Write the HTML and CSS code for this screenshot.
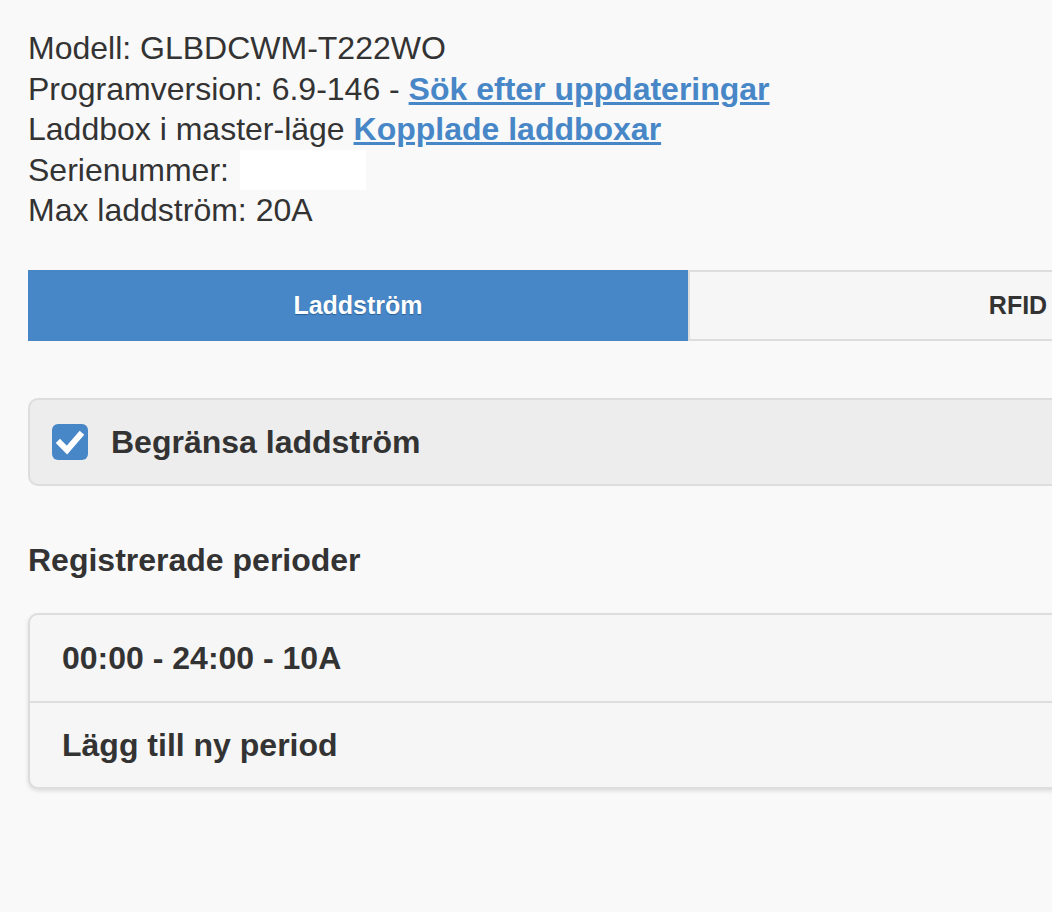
FILE: index.html
```html
<!DOCTYPE html>
<html lang="sv">
<head>
<meta charset="utf-8">
<title>Laddbox</title>
<link rel="stylesheet" href="styles.css">
</head>
<body>
<div class="page">
  <div class="info">
    <div>Modell: GLBDCWM-T222WO</div>
    <div>Programversion: 6.9-146 - <a href="#" class="link">Sök efter uppdateringar</a></div>
    <div>Laddbox i master-läge <a href="#" class="link">Kopplade laddboxar</a></div>
    <div>Serienummer: <span class="masked"></span></div>
    <div>Max laddström: 20A</div>
  </div>

  <div class="navbar">
    <a href="#" class="tab tab-active">Laddström</a>
    <a href="#" class="tab">RFID</a>
  </div>

  <label class="check-panel">
    <span class="checkbox">
      <svg viewBox="0 0 36 36" width="36" height="36"><rect x="0" y="0" width="36" height="36" rx="6" fill="#4887c7"/><path d="M8 19 L15 26 L28 11" fill="none" stroke="#fff" stroke-width="6" stroke-linecap="square" stroke-linejoin="miter"/></svg>
    </span>
    <span class="check-label">Begränsa laddström</span>
  </label>

  <h3 class="heading">Registrerade perioder</h3>

  <ul class="listview">
    <li class="item">00:00 - 24:00 - 10A</li>
    <li class="item">Lägg till ny period</li>
  </ul>
</div>
</body>
</html>
```

FILE: styles.css
```css
html, body {
  margin: 0;
  padding: 0;
  background: #f9f9f9;
  overflow: hidden;
}
body {
  font-family: "Liberation Sans", Arial, Helvetica, sans-serif;
  color: #333;
  font-size: 32px;
  line-height: 40.56px;
}
.page {
  width: 1320px;
  padding: 28px 28px 28px 28px;
}
.info {
  margin-bottom: 39px;
}
.link {
  color: #4887c7;
  font-weight: bold;
  text-decoration: underline;
}
.masked {
  display: inline-block;
  width: 126px;
  height: 40px;
  background: #fff;
  vertical-align: top;
  margin-left: 2px;
}
.navbar {
  display: flex;
  height: 71px;
}
.tab {
  flex: 1;
  display: flex;
  align-items: center;
  justify-content: center;
  font-size: 25px;
  font-weight: bold;
  text-decoration: none;
  color: #333;
  background: #f6f6f6;
  border: 2px solid #dddddd;
  text-shadow: 0 1px 0 #f3f3f3;
}
.tab-active {
  background: #4887c7;
  border-color: #4887c7;
  color: #fff;
  text-shadow: 0 1px 1px #2a5f95;
}
.check-panel {
  display: flex;
  align-items: center;
  margin-top: 57px;
  height: 84px;
  border: 2px solid #dddddd;
  border-radius: 10px;
  background: #ededed;
  padding-left: 22px;
  font-weight: bold;
}
.checkbox {
  display: flex;
  width: 36px;
  height: 36px;
  margin-right: 23px;
}
.heading {
  font-size: 32px;
  font-weight: bold;
  margin: 54px 0 0 0;
  line-height: 40.56px;
}
.listview {
  list-style: none;
  margin: 33px 0 0 0;
  padding: 0;
  border: 2px solid #dddddd;
  border-radius: 10px;
  background: #f6f6f6;
  box-shadow: 0 2px 4px rgba(0,0,0,0.12);
  overflow: hidden;
}
.item {
  font-weight: bold;
  height: 86px;
  display: flex;
  align-items: center;
  padding-left: 32px;
}
.item + .item {
  border-top: 2px solid #dddddd;
  height: 84px;
}
```
